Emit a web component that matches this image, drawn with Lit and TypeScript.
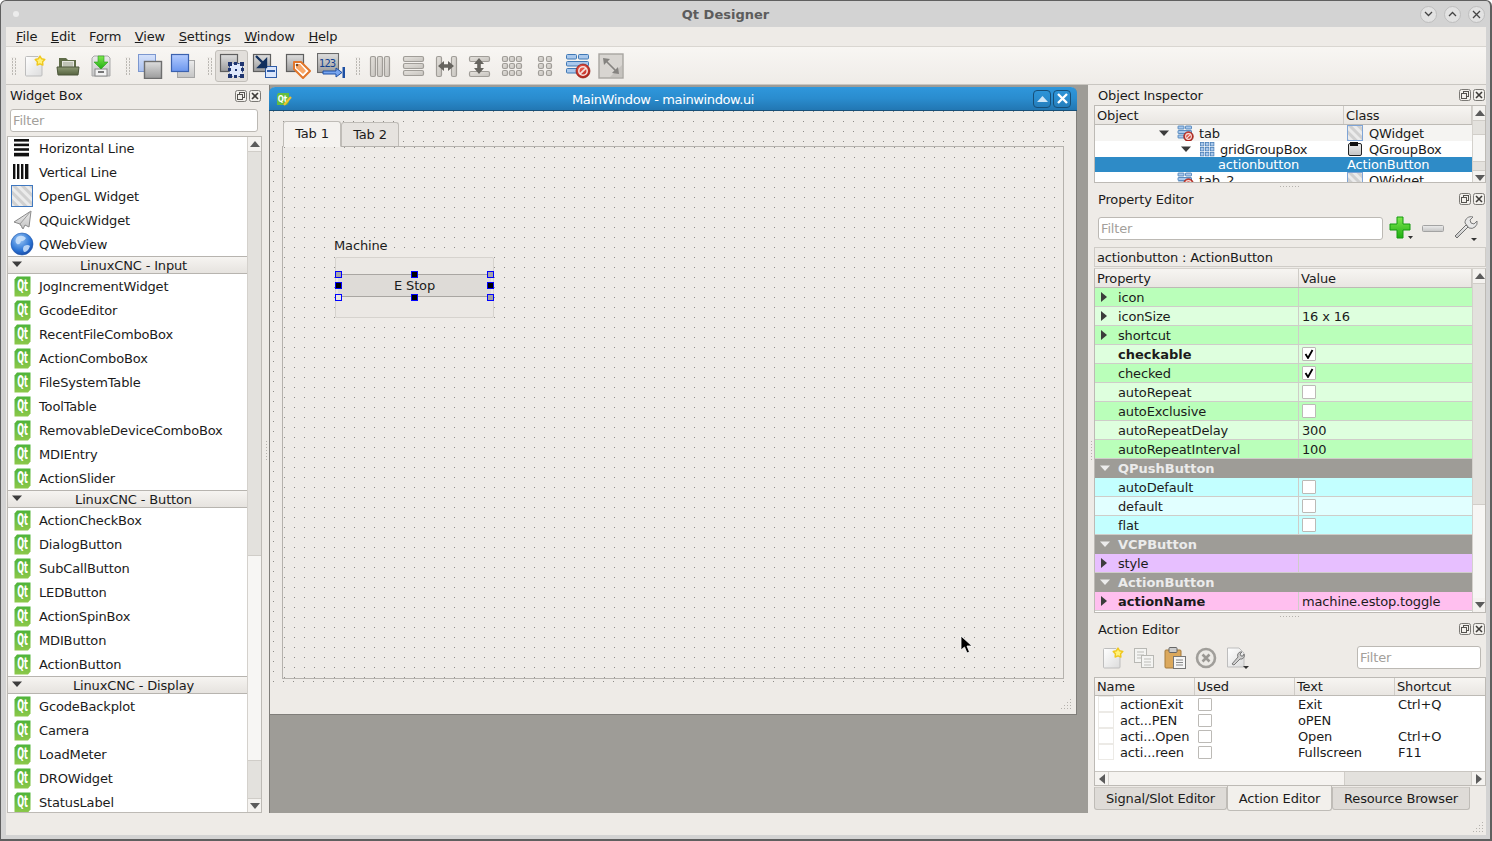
import { LitElement, html, css, svg } from "lit";
import { customElement } from "lit/decorators.js";

const I = (w: number, h: number, c: unknown) =>
  html`<svg class="ico" width=${w} height=${h} viewBox="0 0 ${w} ${h}">${c}</svg>`;

const defs = html`<svg class="defs" width="0" height="0"><defs>
  <linearGradient id="page" x1="0" y1="0" x2="1" y2="1"><stop offset="0" stop-color="#fff"/><stop offset="1" stop-color="#dcdcdc"/></linearGradient>
  <linearGradient id="gray" x1="0" y1="0" x2="0" y2="1"><stop offset="0" stop-color="#dedede"/><stop offset="1" stop-color="#9b9b9b"/></linearGradient>
  <linearGradient id="lgray" x1="0" y1="0" x2="0" y2="1"><stop offset="0" stop-color="#ececec"/><stop offset="1" stop-color="#c4c4c4"/></linearGradient>
  <linearGradient id="lblue" x1="0" y1="0" x2="0" y2="1"><stop offset="0" stop-color="#d6e2fb"/><stop offset="1" stop-color="#a9c0ef"/></linearGradient>
  <linearGradient id="blue" x1="0" y1="0" x2="0" y2="1"><stop offset="0" stop-color="#b4ccff"/><stop offset="1" stop-color="#6b96ee"/></linearGradient>
  <linearGradient id="folder" x1="0" y1="0" x2="0" y2="1"><stop offset="0" stop-color="#8d9a75"/><stop offset="1" stop-color="#56633f"/></linearGradient>
  <linearGradient id="qtg" x1="0" y1="0" x2="0" y2="1"><stop offset="0" stop-color="#4fb43a"/><stop offset="1" stop-color="#8cc84a"/></linearGradient>
  <radialGradient id="globe" cx="0.4" cy="0.3" r="0.8"><stop offset="0" stop-color="#9cc8f5"/><stop offset="0.6" stop-color="#2f77d6"/><stop offset="1" stop-color="#123f9a"/></radialGradient>
  <radialGradient id="red" cx="0.4" cy="0.3" r="0.8"><stop offset="0" stop-color="#ee5a4e"/><stop offset="1" stop-color="#a81c14"/></radialGradient>
  <linearGradient id="bar" x1="0" y1="0" x2="1" y2="1"><stop offset="0" stop-color="#e6e3de"/><stop offset="1" stop-color="#c6c3be"/></linearGradient>
  <linearGradient id="green" x1="0" y1="0" x2="0" y2="1"><stop offset="0" stop-color="#7fe84f"/><stop offset="1" stop-color="#1fae12"/></linearGradient>
  <pattern id="hatch" width="6" height="6" patternUnits="userSpaceOnUse" patternTransform="rotate(-45)"><rect width="6" height="6" fill="#ebebeb"/><rect width="3" height="6" fill="#d0d0d0"/></pattern>
</defs></svg>`;

const star = (x: number, y: number, r: number) => {
  const p: string[] = [];
  for (let i = 0; i < 10; i++) {
    const a = -Math.PI / 2 + (i * Math.PI) / 5;
    const q = i % 2 ? r * 0.55 : r;
    p.push(`${(x + q * Math.cos(a)).toFixed(1)},${(y + q * Math.sin(a)).toFixed(1)}`);
  }
  return svg`<polygon points=${p.join(" ")} fill="#fff27a" stroke="#f0c81e" stroke-width="1.4" stroke-linejoin="round"/>`;
};
const newDoc = I(22, 22, svg`<path d="M1.5 2.5 a1 1 0 0 1 1-1 H14 L18 6 V20 a1 1 0 0 1-1 1 H2.5 a1 1 0 0 1-1-1Z" fill="url(#page)" stroke="#bdbdbd"/>${star(16, 6, 5)}`);
const openIco = I(24, 22, svg`<path d="M3 3 h7 l2 2 h8 v12 H3Z" fill="#5f6c48"/><rect x="6" y="6" width="12" height="8" fill="#e4e6df"/><path d="M7 8h10M7 10h10M7 12h10" stroke="#9aa08d"/><path d="M1 12 h22 l-1 8 H2Z" fill="url(#folder)" stroke="#4c573a"/>`);
const saveIco = I(22, 24, svg`<path d="M4 2 h14 l2 2 V22 H2 V4Z" fill="url(#lgray)" stroke="#a9a9a9"/><rect x="5" y="15" width="12" height="7" fill="#f3f3f3" stroke="#8a8a8a"/><rect x="8" y="17" width="6" height="2" fill="#777"/><path d="M8 2 h6 v6 h4 l-7 7 -7-7 h4Z" fill="url(#green)" stroke="#2d9a1e" stroke-width=".6"/>`);
const ovl1 = I(26, 26, svg`<rect x="1.5" y="1.5" width="17" height="17" fill="url(#lblue)" stroke="#7c97cf"/><rect x="7.5" y="8.5" width="17" height="17" fill="url(#gray)" stroke="#6e6e6e" stroke-width="1.4"/>`);
const ovl2 = I(26, 26, svg`<rect x="7.5" y="7.5" width="17" height="17" fill="url(#lgray)" stroke="#a5a5a5"/><rect x="1.5" y="1.5" width="17" height="17" fill="url(#blue)" stroke="#3c62ae" stroke-width="1.2"/>`);
const handles = svg`<rect x="10.5" y="10.5" width="13" height="13" fill="#dfe8fb" stroke="#2e4a86" stroke-dasharray="2 2"/><g fill="#1f3570"><rect x="9" y="9" width="4" height="4"/><rect x="21" y="9" width="4" height="4"/><rect x="9" y="21" width="4" height="4"/><rect x="21" y="21" width="4" height="4"/><rect x="15" y="9" width="3" height="3"/><rect x="15" y="22" width="3" height="3"/><rect x="9" y="15" width="3" height="3"/><rect x="22" y="15" width="3" height="3"/><rect x="16" y="16" width="2" height="2"/></g>`;
const widgetMode = I(26, 26, svg`<rect x="1.5" y="1.5" width="17" height="17" fill="url(#gray)" stroke="#5f5f5f" stroke-width="1.2"/>${handles}`);
const signalMode = I(26, 26, svg`<rect x="1.5" y="1.5" width="17" height="17" fill="url(#gray)" stroke="#5f5f5f" stroke-width="1.2"/><rect x="13.5" y="13.5" width="11" height="11" fill="#dbe6fb" stroke="#2f5ca8"/><rect x="15" y="17" width="8" height="2" fill="#2f5ca8"/><path d="M4 3 L12 11 M14 7 V14 H7Z" stroke="#12305e" stroke-width="2.4" fill="#12305e"/>`);
const buddyMode = I(26, 26, svg`<rect x="1.5" y="1.5" width="17" height="17" fill="url(#gray)" stroke="#5f5f5f" stroke-width="1.2"/><path d="M9 9 h7 l9 9 -7 7 -9-9Z" fill="#fff" stroke="#e2762a" stroke-width="2" stroke-linejoin="round"/><path d="M11 11 h4 l6 7 -3 3 -7-6Z" fill="#f9a767"/><circle cx="12" cy="12" r="1.3" fill="#7a4a22"/>`);
const tabMode = I(28, 26, svg`<rect x=".5" y=".5" width="21" height="19" fill="url(#gray)" stroke="#6a6a6a" stroke-width="1.1"/><text x="2" y="14" font-family="DejaVu Sans" font-size="10" fill="#123f8f" textLength="17">123</text><path d="M6 18 h13 v-3 l6 4.5 -6 4.5 v-3 H6Z" fill="#78a6f0" stroke="#1d4fa3"/><rect x="25.5" y="14" width="2.5" height="11" fill="#1d4fa3"/>`);
const bars = (r: number[][]) => r.map(([x, y, w, h]) => svg`<rect x=${x + 0.5} y=${y + 0.5} width=${w} height=${h} rx="1.5" fill="url(#bar)" stroke="#a09d98" stroke-width="1.2"/>`);
const layV = I(24, 24, bars([[2, 2, 5, 20], [9, 2, 5, 20], [16, 2, 5, 20]]));
const layH = I(24, 24, bars([[2, 2, 20, 5], [2, 9, 20, 5], [2, 16, 20, 5]]));
const splitH = I(24, 24, svg`${bars([[2, 2, 5, 20], [17, 2, 5, 20]])}<path d="M4 12 l6-5 v3.2 h4 V7 l6 5 -6 5 v-3.2 h-4 V17Z" fill="#66645f"/>`);
const splitV = I(24, 24, svg`${bars([[2, 2, 20, 5], [2, 17, 20, 5]])}<path d="M12 4 l-5 6 h3.2 v4 H7 l5 6 5-6 h-3.2 v-4 H17Z" fill="#66645f"/>`);
const grid3 = (() => { const r: number[][] = []; for (const x of [2, 9, 16]) for (const y of [2, 9, 16]) r.push([x, y, 5, 5]); return I(24, 24, bars(r)); })();
const grid2 = (() => { const r: number[][] = []; for (const x of [5, 13]) for (const y of [2, 9, 16]) r.push([x, y, 5, 5]); return I(24, 24, bars(r)); })();
const noSign = (cx: number, cy: number, r: number) => svg`<circle cx=${cx} cy=${cy} r=${r} fill="url(#red)" stroke="#8e1a12" stroke-width=".7"/><circle cx=${cx} cy=${cy} r=${r * 0.6} fill="none" stroke="#f4e3df" stroke-width=${r * 0.22}/><path d="M${cx - r * 0.45} ${cy + r * 0.45} L${cx + r * 0.45} ${cy - r * 0.45}" stroke="#f4e3df" stroke-width=${r * 0.24}/>`;
const tableBreak = I(26, 26, svg`<g fill="#a9c8ec" stroke="#3f78b5"><rect x="1.5" y="1.5" width="10" height="4.5" rx="1"/><rect x="13.5" y="1.5" width="10" height="4.5" rx="1"/><rect x="1.5" y="8.5" width="22" height="4.5" rx="1"/><rect x="1.5" y="15.5" width="12" height="4.5" rx="1"/></g>${noSign(18, 18, 7)}`);
const adjust = I(26, 26, svg`<rect x="1" y="1" width="24" height="24" fill="#d8d5d1" stroke="#a8a5a1" stroke-width="1.4"/><path d="M24 24 V12 L12 24Z" fill="#c6c3bf"/><path d="M5 5 l7 1 -2.4 2.4 8 8 2.4-2.4 1 7 -7-1 2.4-2.4 -8-8 -2.4 2.4Z" fill="#858380"/>`);

const qt = I(17, 21, svg`<path d="M3 .5 H16.5 V17.5 L14 20.5 H.5 V3.5Z" fill="url(#qtg)"/><text transform="translate(8.5 14.5) scale(.62 1.2)" text-anchor="middle" font-family="DejaVu Sans" font-weight="700" font-size="13" fill="#fff">Qt</text>`);
const hline = I(22, 22, svg`<g fill="#111"><rect x="3" y="2" width="15" height="2.6"/><rect x="3" y="6.6" width="15" height="2.6"/><rect x="3" y="11.2" width="15" height="2.6"/><rect x="3" y="15.8" width="15" height="3.6"/></g>`);
const vline = I(22, 22, svg`<g fill="#111"><rect x="2" y="3" width="2.4" height="15"/><rect x="6" y="3" width="2.4" height="15"/><rect x="10" y="3" width="2.4" height="15"/><rect x="14" y="3" width="3.4" height="15"/></g>`);
const hatchBox = (s: number, c: string) => I(s, s, svg`<rect x=".5" y=".5" width=${s - 1} height=${s - 1} fill="url(#hatch)" stroke=${c}/>`);
const plane = I(22, 22, svg`<path d="M20 2 L3 13 l6 2 3 5 2-4 4 2Z" fill="url(#lgray)" stroke="#8b8b8b"/><path d="M20 2 L9 15 l3 5" fill="none" stroke="#9b9b9b"/>`);
const globe = I(24, 24, svg`<circle cx="12" cy="12" r="11" fill="url(#globe)" stroke="#2057ad" stroke-width=".6"/><path d="M7 5 q5-3 9 1 q-2 4-5 3 q-1 4-4 3 q-3-3 0-7Z M14 14 q4-2 6 0 q-2 6-6 6 q-2-3 0-6Z" fill="#cfe4fb" opacity=".85"/>`);
const formIco = I(17, 17, svg`<g fill="#a9c8ec" stroke="#3f78b5" stroke-width=".8"><rect x="1" y="1" width="6" height="3" rx=".5"/><rect x="8.5" y="1" width="6" height="3" rx=".5"/><rect x="1" y="5.5" width="13.5" height="3" rx=".5"/><rect x="1" y="10" width="7" height="3" rx=".5"/></g>${noSign(11.5, 11.5, 4.8)}`);
const gridIco = I(16, 16, (() => { const o: unknown[] = []; for (const x of [1, 6, 11]) for (const y of [1, 6, 11]) o.push(svg`<rect x=${x + 0.5} y=${y + 0.5} width="3.4" height="3.4" fill="#a9c8ec" stroke="#4a7fb8" stroke-width=".8"/>`); return o; })());
const groupIco = I(16, 16, svg`<rect x="1.5" y="2.5" width="13" height="12" rx="1.5" fill="url(#lgray)" stroke="#222"/><rect x="3" y="1" width="8" height="4" fill="#111"/>`);
const widgetIco = hatchBox(16, "#7ea4d6");

const triR = I(8, 10, svg`<path d="M1 0 L7 5 L1 10Z" fill="#3c3c3c"/>`);
const triD = I(12, 7, svg`<path d="M1 0.5 H11 L6 6Z" fill="#3c3c3c"/>`);
const triDw = I(12, 7, svg`<path d="M1 0.5 H11 L6 6Z" fill="#ececec"/>`);
const sbUp = I(10, 6, svg`<path d="M0 6 L5 0 L10 6Z" fill="#5b5b5b"/>`);
const sbDn = I(10, 6, svg`<path d="M0 0 L5 6 L10 0Z" fill="#5b5b5b"/>`);
const sbL = I(6, 10, svg`<path d="M6 0 L0 5 L6 10Z" fill="#5b5b5b"/>`);
const sbR = I(6, 10, svg`<path d="M0 0 L6 5 L0 10Z" fill="#5b5b5b"/>`);
const floatI = I(12, 12, svg`<rect x=".5" y=".5" width="11" height="11" rx="2" fill="#f2f0ec" stroke="#7b7975"/><rect x="4.5" y="2.5" width="5" height="5" fill="none" stroke="#55534f"/><rect x="2.5" y="4.5" width="5" height="5" fill="#f2f0ec" stroke="#55534f"/>`);
const closeI = I(12, 12, svg`<rect x=".5" y=".5" width="11" height="11" rx="2" fill="#f2f0ec" stroke="#7b7975"/><path d="M3 3 L9 9 M9 3 L3 9" stroke="#3e3c39" stroke-width="1.6"/>`);
const checkI = I(10, 10, svg`<path d="M1.5 5 L4 9 L8.5 1" fill="none" stroke="#000" stroke-width="1.8"/>`);

const plusI = I(26, 24, svg`<path d="M9 1 h6 v7 h7 v6 h-7 v8 H9 v-8 H2 V8 h7Z" fill="url(#green)" stroke="#149a10"/><path d="M20 20 h5 l-2.5 3Z" fill="#333"/>`);
const minusI = I(22, 7, svg`<rect x=".5" y=".5" width="21" height="6" rx="1" fill="url(#lgray)" stroke="#a3a3a3"/>`);
const wrenchI = I(26, 28, svg`<path d="M3 22 L14 11 l2 2 L5 24Z" fill="url(#lgray)" stroke="#6f6f6f"/><path d="M13 9 a6 6 0 0 1 8-6 l-3 3 1 3 3 1 3-3 a6 6 0 0 1-8 7Z" fill="#e8e8e8" stroke="#7a7a7a"/><path d="M19 24 h6 l-3 3Z" fill="#333"/>`);
const copyI = I(22, 22, svg`<rect x="1.5" y="1.5" width="12" height="14" fill="#f4f4f2" stroke="#b8b8b4"/><path d="M4 5h7M4 8h7M4 11h7" stroke="#bdbdb9"/><rect x="8.5" y="8.5" width="12" height="12" fill="#f4f4f2" stroke="#b8b8b4"/><path d="M11 12h7M11 15h7M11 18h7" stroke="#bdbdb9"/>`);
const pasteI = I(22, 24, svg`<rect x="1" y="4" width="16" height="18" rx="1" fill="#dba85c" stroke="#a57a3a"/><rect x="5" y="1.5" width="8" height="5" rx="1" fill="#ccc" stroke="#666"/><rect x="9.5" y="10.5" width="12" height="12" fill="#f6f6f6" stroke="#777"/><path d="M12 14h7M12 16.5h7M12 19h7" stroke="#888"/>`);
const delI = I(22, 22, svg`<circle cx="11" cy="11" r="9" fill="#eceae6" stroke="#a09e9a" stroke-width="2.6"/><path d="M7.5 7.5 L14.5 14.5 M14.5 7.5 L7.5 14.5" stroke="#9a9894" stroke-width="2.6"/>`);
const docWrench = I(24, 24, svg`<path d="M1.5 2 H13 l5 5 V21 H1.5Z" fill="url(#page)" stroke="#bdbdbd"/><path d="M6 18 L12 11 a3.5 3.5 0 0 1 4-5 l-2 2 1 2 2 0 1-2 a3.5 3.5 0 0 1-4 5 l-6 6Z" fill="#d0d0d0" stroke="#777"/><path d="M17 20 h6 l-3 3Z" fill="#333"/>`);

const sections: { title?: string; items: string[]; plain?: unknown[] }[] = [
  { items: ["Horizontal Line", "Vertical Line", "OpenGL Widget", "QQuickWidget", "QWebView"], plain: [hline, vline, hatchBox(22, "#3f78c0"), plane, globe] },
  { title: "LinuxCNC - Input", items: ["JogIncrementWidget", "GcodeEditor", "RecentFileComboBox", "ActionComboBox", "FileSystemTable", "ToolTable", "RemovableDeviceComboBox", "MDIEntry", "ActionSlider"] },
  { title: "LinuxCNC - Button", items: ["ActionCheckBox", "DialogButton", "SubCallButton", "LEDButton", "ActionSpinBox", "MDIButton", "ActionButton"] },
  { title: "LinuxCNC - Display", items: ["GcodeBackplot", "Camera", "LoadMeter", "DROWidget", "StatusLabel"] },
];

type Prop = { g?: string; n?: string; v?: string; c?: string; arrow?: boolean; bold?: boolean; chk?: boolean };
const props: Prop[] = [
  { n: "icon", c: "gd", arrow: true },
  { n: "iconSize", v: "16 x 16", c: "gl", arrow: true },
  { n: "shortcut", c: "gd", arrow: true },
  { n: "checkable", c: "gl", bold: true, chk: true },
  { n: "checked", c: "gd", chk: true },
  { n: "autoRepeat", c: "gl", chk: false },
  { n: "autoExclusive", c: "gd", chk: false },
  { n: "autoRepeatDelay", v: "300", c: "gl" },
  { n: "autoRepeatInterval", v: "100", c: "gd" },
  { g: "QPushButton" },
  { n: "autoDefault", c: "cd", chk: false },
  { n: "default", c: "cl", chk: false },
  { n: "flat", c: "cd", chk: false },
  { g: "VCPButton" },
  { n: "style", c: "pu", arrow: true },
  { g: "ActionButton" },
  { n: "actionName", v: "machine.estop.toggle", c: "pk", arrow: true, bold: true },
];

const actions = [
  ["actionExit", "Exit", "Ctrl+Q"],
  ["act...PEN", "oPEN", ""],
  ["acti...Open", "Open", "Ctrl+O"],
  ["acti...reen", "Fullscreen", "F11"],
];

const vbar = (parts: [string, number][], up = true) => html`<div class="sb">
  <div class="sb-arrow">${up ? sbUp : ""}</div>
  ${parts.map(([c, h]) => html`<div class=${c} style="height:${h}px"></div>`)}
  <div class="sb-fill"></div>
  <div class="sb-arrow">${sbDn}</div>
</div>`;

const dockHead = (t: string) => html`<div class="dock-head"><span>${t}</span><span class="dock-btns">${floatI}${closeI}</span></div>`;

@customElement("app-root")
export class AppRoot extends LitElement {
  static styles = css`
    :host { display: block; width: 1492px; height: 841px; font: 13px/1 "DejaVu Sans", sans-serif; color: #1b1b1b; letter-spacing: -0.15px; }
    * { box-sizing: border-box; }
    .ico { display: block; flex: none; }
    .defs { position: absolute; }
    .frame { width: 1492px; height: 841px; background: #d3d3d3; border: solid #5f5f5f; border-width: 1px 2px 2px 1px; border-radius: 6px 6px 0 0; padding: 0 4px 4px 5px; display: flex; flex-direction: column; overflow: hidden; }
    .title { height: 26px; display: flex; align-items: center; margin: 0 -4px 0 -5px; }
    .dot-wrap { width: 30px; padding-left: 12px; }
    .dot { width: 6px; height: 6px; border-radius: 50%; background: #ececec; }
    .title-text { flex: 1; text-align: center; font-weight: 700; color: #5c5c5c; letter-spacing: 0; }
    .wbtns { width: 70px; display: flex; gap: 7px; }
    .wbtn { width: 17px; height: 17px; border-radius: 50%; background: #e2e2e2; border: 1px solid #bdbdbd; display: flex; align-items: center; justify-content: center; }
    .body { flex: 1; background: #eeebe7; display: flex; flex-direction: column; min-height: 0; }
    .menu { height: 20px; display: flex; padding-left: 3.3px; align-items: center; border-bottom: 1px solid #d9d6d1; }
    .menu span { padding: 0 6.8px; }
    .tb { height: 38px; display: flex; align-items: center; padding-left: 5px; background: linear-gradient(#f8f6f3, #efece8); border-bottom: 1px solid #c9c6c1; }
    .grip { width: 5px; height: 18px; margin: 0 3px 0 8px; background: linear-gradient(#eeebe7 0 1px, transparent 1px 3px) 0 0 / 3px 3px, linear-gradient(90deg, transparent 0 1px, #bbb8b3 1px 2px, transparent 2px 4px, #bbb8b3 4px 5px); }
    .grip.first { margin-left: 0; margin-right: 2px; }
    .tbtn { width: 33px; height: 32px; display: flex; align-items: center; justify-content: center; }
    .tbtn.on { background: #e2dfdb; border: 1px solid #c2bfba; border-radius: 3px; }
    .main { height: 728px; display: flex; }
    .left { width: 258px; padding-left: 1px; display: flex; flex-direction: column; }
    .vsplit { flex: none; display: flex; align-items: center; justify-content: center; }
    .vsplit.s5 { width: 5px; } .vsplit.s6 { width: 6px; }
    .vsplit i { width: 1px; height: 20px; margin-top: 4px; background: repeating-linear-gradient(#b5b2ad 0 1px, transparent 1px 3px); }
    .dock-head { height: 20px; flex: none; display: flex; justify-content: space-between; align-items: center; padding: 1px 2px 0 3px; }
    .dock-btns { display: flex; gap: 2px; }
    .left .dock-head { padding-right: 3px; padding-left: 3px; }
    .filter { height: 23px; border: 1px solid #bcb9b4; border-radius: 3px; background: #fff; color: #a3a09b; padding-left: 2px; display: flex; align-items: center; }
    .left .filter { margin: 4px 0 4px 3px; width: 248px; }
    .list { flex: 1; width: 255px; min-height: 0; display: flex; border: 1px solid #bdbab5; background: #fff; overflow: hidden; }
    .list-body { width: 240px; overflow: hidden; margin-top: -1px; }
    .item { height: 24px; display: flex; align-items: center; gap: 6px; padding-left: 3px; }
    .item .slot { width: 22px; height: 24px; display: flex; align-items: center; justify-content: center; }
    .cat { height: 18px; display: flex; align-items: center; position: relative; justify-content: center; padding-left: 12px; background: linear-gradient(#f6f4f1, #e6e3df); border: solid #b7b4af; border-width: 1px 0; }
    .cat .ico { position: absolute; left: 3px; top: 4px; }
    .sb { width: 14px; flex: none; display: flex; flex-direction: column; background: #f7f6f4; border-left: 1px solid #d4d1cc; }
    .sb-arrow { height: 14px; flex: none; display: flex; align-items: center; justify-content: center; background: #f4f2ef; }
    .thumb { background: #e3e1dd; border: solid #d0cdc8; border-width: 1px 0; flex: none; }
    .gap { flex: none; }
    .sb-fill { flex: 1; }
    .mdi { width: 819px; flex: none; background: #9e9c97; position: relative; border-left: 1px solid #7f7d79; }
    .sub { position: absolute; left: -1px; top: 2px; width: 808px; height: 628px; background: #eeebe7; border: 1px solid #807e7a; border-top: 0; border-radius: 6px 6px 0 0; display: flex; flex-direction: column; }
    .sub-title { height: 24px; flex: none; margin: 0 -1px; border-radius: 6px 6px 0 0; background: linear-gradient(#2f97dc, #2a8cce 50%, #2277b3); border-bottom: 1px solid #174f78; display: flex; align-items: center; color: #fff; position: relative; padding: 0 6px 0 7px; }
    .sub-title .cap { position: absolute; left: 0; right: 20px; top: 6px; text-align: center; letter-spacing: -0.38px; }
    .sub-btns { margin-left: auto; display: flex; gap: 2px; }
    .sub-btn { width: 18px; height: 18px; border: 1px solid #174f78; border-radius: 4px; display: flex; align-items: center; justify-content: center; }
    .form { width: 796px; height: 575px; flex: none; padding: 9px 0 0 12px; background:
      linear-gradient(#eeebe7 0 9px, transparent 9px) 4px 1px / 10px 10px,
      linear-gradient(90deg, #eeebe7 0 9px, transparent 9px) 4px 1px / 10px 10px, #908e8a; }
    .ftabs { display: flex; height: 26px; align-items: flex-end; padding-left: 1px; }
    .ftab { height: 24px; width: 58px; display: flex; align-items: center; justify-content: center; background: #e6e3df; border: 1px solid #bfbcb7; border-bottom: 0; border-radius: 3px 3px 0 0; }
    .ftab.on { height: 26px; background: #f4f2ef; margin-bottom: -1px; position: relative; z-index: 1; padding-bottom: 2px; border-bottom: 1px solid #f4f2ef; }
    .pane { position: relative; width: 782px; height: 533px; border: 1px solid #b5b2ad; background:
      linear-gradient(#eeebe7 0 9px, transparent 9px) 2px 1px / 10px 10px,
      linear-gradient(90deg, #eeebe7 0 9px, transparent 9px) 2px 1px / 10px 10px, #908e8a; }
    .gl { position: absolute; left: 51px; top: 91px; background: #eeebe7; line-height: 15px; }
    .gb { position: absolute; left: 52px; top: 110px; width: 159px; height: 61px; background: #ebe8e4; border: 1px solid #d6d3ce; border-radius: 2px; }
    .btn { position: absolute; left: 2px; top: 16px; width: 153px; height: 23px; background: #dedbd7; border: solid #a9a6a2; border-width: 1px 0; display: flex; align-items: center; justify-content: center; }
    .h { position: absolute; width: 7px; height: 7px; border: 1px solid #0000ff; }
    .h.k { background: #000; } .h.g { background: #a5a5a5; } .h.w { background: #e9e6e2; }
    .grip2 { position: absolute; right: 4px; bottom: 4px; }
    .cursor { position: absolute; left: 677px; top: 488px; }
    .right { width: 392px; flex: none; display: flex; flex-direction: column; }
    .right .dock-head { padding: 0 1px 0 4px; }
    .tree { height: 78px; flex: none; border: 1px solid #bdbab5; display: flex; background: #fff; overflow: hidden; }
    .tree-main { width: 377px; flex: none; overflow: hidden; }
    .hdr { display: grid; height: 19px; background: linear-gradient(#f7f5f2, #e9e6e2); border-bottom: 1px solid #bdbab5; }
    .hdr > div { padding-left: 2px; display: flex; align-items: center; border-right: 1px solid #cfccc7; }
    .hdr.t1 { grid-template-columns: 249px 128px; }
    .hdr.t2 { grid-template-columns: 204px 173px; }
    .hdr.t3 { grid-template-columns: 100px 100px 100px 91px; height: 18px; }
    .trow { height: 16px; display: grid; grid-template-columns: 249px 128px; }
    .trow.alt { background: #f5f4f2; }
    .trow.sel { background: #2e8bc7; color: #fff; height: 15px; }
    .tc { display: flex; align-items: center; overflow: hidden; white-space: nowrap; }
    .tarrow { width: 19px; flex: none; margin-left: -1px; }
    .tname { margin-left: 5px; }
    .cc { padding-left: 3px; gap: 6px; }
    .hsplit { height: 7px; flex: none; display: flex; align-items: center; justify-content: center; }
    .hsplit.s6 { height: 6px; }
    .hsplit i { width: 20px; height: 1px; background: repeating-linear-gradient(90deg, #b5b2ad 0 1px, transparent 1px 3px); }
    .pf { height: 38px; flex: none; display: flex; align-items: center; padding-left: 4px; }
    .pf .filter { width: 285px; margin-right: 2px; }
    .pf .pb { width: 32px; display: flex; justify-content: center; }
    .plabel { height: 20px; flex: none; border: 1px solid #cfccc7; display: flex; align-items: center; padding-left: 2px; }
    .ptable { height: 345px; flex: none; display: flex; border: 1px solid #bdbab5; border-top: 1px solid #d5d2cd; background: #fff; overflow: hidden; margin-top: 1px; }
    .ptable .tree-main { background: #fff; }
    .prow { height: 19px; display: grid; grid-template-columns: 204px 173px; border-bottom: 1px solid #cfcdc9; }
    .prow > div { display: flex; align-items: center; }
    .pn { padding-left: 5px; border-right: 1px solid #cfcdc9; }
    .pn .a { width: 18px; flex: none; }
    .pv { padding-left: 3px; }
    .b { font-weight: 700; letter-spacing: 0; }
    .gd { background: #baffba; } .gl2 { background: #deffde; }
    .cd { background: #c3ffff; } .cl { background: #e1ffff; }
    .pu { background: #e7bfff; } .pk { background: #ffbfef; }
    .prow.grp { display: flex; background: #9e9c97; color: #ebebeb; font-weight: 700; letter-spacing: 0; align-items: center; padding-left: 4px; border-bottom: 0; }
    .prow.grp .a { width: 19px; }
    .cb { width: 14px; height: 14px; background: #fff; border: 1px solid #bcbab6; border-radius: 1px; display: flex; align-items: center; justify-content: center; }
    .at { height: 38px; flex: none; display: flex; align-items: center; padding: 1px 5px 0 8px; margin-top: -1px; }
    .at .ab { width: 31px; display: flex; }
    .at .filter { margin-left: auto; width: 124px; }
    .atable { height: 109px; flex: none; border: 1px solid #bdbab5; background: #fff; display: flex; flex-direction: column; overflow: hidden; margin-top: 1px; }
    .arow { height: 16px; display: grid; grid-template-columns: 100px 100px 100px 91px; }
    .arow > div { display: flex; align-items: center; }
    .an { padding-left: 3px; }
    .an i { width: 16px; height: 16px; border: 1px solid #eceae6; margin-right: 6px; flex: none; }
    .au { padding-left: 3px; }
    .au .cb { height: 13px; }
    .at3 { padding-left: 3px; }
    .afill { flex: 1; }
    .hsb { height: 14px; flex: none; display: flex; background: #f5f3f0; border-top: 1px solid #c9c6c1; }
    .hsb > div { display: flex; align-items: center; justify-content: center; }
    .hsb .end { width: 13px; }
    .hsb .w1 { width: 236px; border-left: 1px solid #d4d1cc; }
    .hsb .w2 { flex: 1; background: #e3e1dd; border: solid #d0cdc8; border-width: 0 1px; }
    .rtabs { display: flex; height: 26px; padding-top: 1px; flex: none; align-items: flex-start; }
    .rtab { height: 23px; display: flex; align-items: center; justify-content: center; background: #dedbd7; border: 1px solid #bfbcb7; border-top-color: #cfccc7; border-radius: 0 0 3px 3px; }
    .rtab.on { height: 25px; background: #f2f0ec; margin-top: -1px; border-top: 0; }
    .w133 { width: 133px; } .w105 { width: 105px; } .w138 { width: 138px; }
    .status { flex: 1; position: relative; }
    .sgrip { position: absolute; right: 2px; bottom: 2px; }
  `;

  render() {
    const tbg = (i: unknown, on = false) => html`<div class="tbtn ${on ? "on" : ""}">${i}</div>`;
    const grip = (first = false) => html`<div class="grip ${first ? "first" : ""}"></div>`;
    const gripDots = I(12, 12, svg`<g fill="#b5b2ad"><rect x="10" y="1" width="1" height="1"/><rect x="7" y="4" width="1" height="1"/><rect x="10" y="4" width="1" height="1"/><rect x="4" y="7" width="1" height="1"/><rect x="7" y="7" width="1" height="1"/><rect x="10" y="7" width="1" height="1"/><rect x="1" y="10" width="1" height="1"/><rect x="4" y="10" width="1" height="1"/><rect x="7" y="10" width="1" height="1"/><rect x="10" y="10" width="1" height="1"/></g>`);
    const hs: [number, number, string][] = [[0, 0, "g"], [76, 0, "k"], [152, 0, "g"], [0, 11, "k"], [152, 11, "k"], [0, 23, "w"], [76, 23, "k"], [152, 23, "g"]];
    const treeRows = [
      { pad: 64, arrow: true, ico: formIco, n: "tab", ci: widgetIco, c: "QWidget", cls: "alt" },
      { pad: 86, arrow: true, ico: gridIco, n: "gridGroupBox", ci: groupIco, c: "QGroupBox", cls: "" },
      { pad: 123, arrow: false, ico: null, n: "actionbutton", ci: null, c: "ActionButton", cls: "sel" },
      { pad: 64, arrow: false, ico: formIco, n: "tab_2", ci: widgetIco, c: "QWidget", cls: "" },
    ];
    return html`${defs}<div class="frame">
      <div class="title">
        <div class="dot-wrap"><div class="dot"></div></div>
        <div class="title-text">Qt Designer</div>
        <div class="wbtns">
          <div class="wbtn">${I(9, 6, svg`<path d="M1 1 L4.5 4.5 L8 1" fill="none" stroke="#444" stroke-width="1.3"/>`)}</div>
          <div class="wbtn">${I(9, 6, svg`<path d="M1 5 L4.5 1.5 L8 5" fill="none" stroke="#444" stroke-width="1.3"/>`)}</div>
          <div class="wbtn">${I(9, 9, svg`<path d="M1 1 L8 8 M8 1 L1 8" fill="none" stroke="#444" stroke-width="1.3"/>`)}</div>
        </div>
      </div>
      <div class="body">
        <div class="menu">
          <span><u>F</u>ile</span><span><u>E</u>dit</span><span>F<u>o</u>rm</span><span><u>V</u>iew</span><span><u>S</u>ettings</span><span><u>W</u>indow</span><span><u>H</u>elp</span>
        </div>
        <div class="tb">
          ${grip(true)}${tbg(newDoc)}${tbg(openIco)}${tbg(saveIco)}
          ${grip()}${tbg(ovl1)}${tbg(ovl2)}
          ${grip()}${tbg(widgetMode, true)}${tbg(signalMode)}${tbg(buddyMode)}${tbg(tabMode)}
          ${grip()}${tbg(layV)}${tbg(layH)}${tbg(splitH)}${tbg(splitV)}${tbg(grid3)}${tbg(grid2)}${tbg(tableBreak)}${tbg(adjust)}
        </div>
        <div class="main">
          <div class="left">
            ${dockHead("Widget Box")}
            <div class="filter">Filter</div>
            <div class="list">
              <div class="list-body">
                ${sections.map((s) => html`
                  ${s.title ? html`<div class="cat">${triD}<span>${s.title}</span></div>` : ""}
                  ${s.items.map((n, i) => html`<div class="item"><div class="slot">${s.plain ? s.plain[i] : qt}</div><span>${n}</span></div>`)}
                `)}
              </div>
              ${vbar([["thumb", 405], ["gap", 204], ["thumb", 39]])}
            </div>
          </div>
          <div class="vsplit s5"><i></i></div>
          <div class="mdi">
            <div class="sub">
              <div class="sub-title">
                ${I(16, 14, svg`<path d="M2 1 H13 V10 L11 13 H1 V3Z" fill="#65bd3f"/><text transform="translate(6.5 10) scale(.8 1)" text-anchor="middle" font-family="DejaVu Sans" font-weight="700" font-size="9" fill="#fff">Qt</text><path d="M15 5 L8 13" stroke="#f1c232" stroke-width="2"/>`)}
                <span class="cap">MainWindow - mainwindow.ui</span>
                <div class="sub-btns">
                  <div class="sub-btn">${I(11, 6, svg`<path d="M0 6 L5.5 0 L11 6Z" fill="#cfe6f7"/>`)}</div>
                  <div class="sub-btn">${I(11, 11, svg`<path d="M1 1 L10 10 M10 1 L1 10" stroke="#fff" stroke-width="2.4"/>`)}</div>
                </div>
              </div>
              <div class="form">
                <div class="ftabs"><div class="ftab on">Tab 1</div><div class="ftab">Tab 2</div></div>
                <div class="pane">
                  <div class="gl">Machine</div>
                  <div class="gb">
                    <div class="btn">E Stop</div>
                    ${hs.map(([x, y, c]) => html`<div class="h ${c}" style="left:${x - 1}px;top:${y + 13}px"></div>`)}
                  </div>
                  <div class="cursor">${I(14, 20, svg`<path d="M1 1 V15 L4.5 12 L7 18 L9.5 17 L7 11 H12Z" fill="#000" stroke="#fff" stroke-width=".8"/>`)}</div>
                </div>
              </div>
              <div class="grip2">${gripDots}</div>
            </div>
          </div>
          <div class="vsplit s6"><i></i></div>
          <div class="right">
            ${dockHead("Object Inspector")}
            <div class="tree">
              <div class="tree-main">
                <div class="hdr t1"><div>Object</div><div>Class</div></div>
                ${treeRows.map((r) => html`<div class="trow ${r.cls}">
                  <div class="tc" style="padding-left:${r.pad}px">
                    ${r.ico ? html`<div class="tarrow">${r.arrow ? triD : ""}</div>${r.ico}<span class="tname">${r.n}</span>` : html`<span>${r.n}</span>`}
                  </div>
                  <div class="tc cc">${r.ci}<span>${r.c}</span></div>
                </div>`)}
              </div>
              ${vbar([["thumb", 15], ["gap", 26], ["thumb", 10]])}
            </div>
            <div class="hsplit s6"><i></i></div>
            ${dockHead("Property Editor")}
            <div class="pf"><div class="filter">Filter</div><div class="pb">${plusI}</div><div class="pb">${minusI}</div><div class="pb">${wrenchI}</div></div>
            <div class="plabel">actionbutton : ActionButton</div>
            <div class="ptable">
              <div class="tree-main">
                <div class="hdr t2"><div>Property</div><div>Value</div></div>
                ${props.map((p) => p.g
                  ? html`<div class="prow grp"><div class="a">${triDw}</div><span>${p.g}</span></div>`
                  : html`<div class="prow ${p.c === "gl" ? "gl2" : p.c}">
                      <div class="pn"><div class="a">${p.arrow ? triR : ""}</div><span class=${p.bold ? "b" : ""}>${p.n}</span></div>
                      <div class="pv">${p.chk !== undefined ? html`<div class="cb">${p.chk ? checkI : ""}</div>` : p.v ?? ""}</div>
                    </div>`)}
              </div>
              ${vbar([["thumb", 222]])}
            </div>
            <div class="hsplit s6"><i></i></div>
            ${dockHead("Action Editor")}
            <div class="at">
              <div class="ab">${newDoc}</div><div class="ab">${copyI}</div><div class="ab">${pasteI}</div><div class="ab">${delI}</div><div class="ab">${docWrench}</div>
              <div class="filter">Filter</div>
            </div>
            <div class="atable">
              <div class="hdr t3"><div>Name</div><div>Used</div><div>Text</div><div>Shortcut</div></div>
              ${actions.map((a) => html`<div class="arow">
                <div class="an"><i></i><span>${a[0]}</span></div>
                <div class="au"><div class="cb"></div></div>
                <div class="at3">${a[1]}</div>
                <div class="at3">${a[2]}</div>
              </div>`)}
              <div class="afill"></div>
              <div class="hsb"><div class="end">${sbL}</div><div class="w1"></div><div class="w2"></div><div class="end">${sbR}</div></div>
            </div>
            <div class="rtabs">
              <div class="rtab w133">Signal/Slot Editor</div>
              <div class="rtab on w105">Action Editor</div>
              <div class="rtab w138">Resource Browser</div>
            </div>
          </div>
        </div>
        <div class="status"><div class="sgrip">${gripDots}</div></div>
      </div>
    </div>`;
  }
}
